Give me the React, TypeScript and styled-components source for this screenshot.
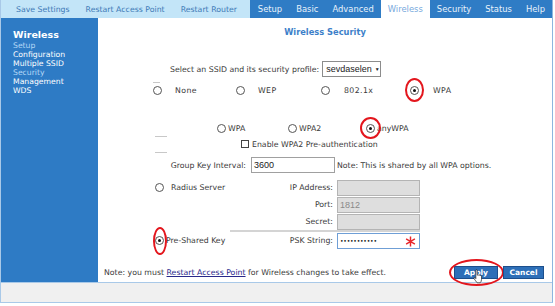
import React from 'react';
import styled, { createGlobalStyle } from 'styled-components';

const GlobalStyle = createGlobalStyle`
  html, body { margin: 0; padding: 0; background: #fff; }
  body {
    font-family: 'DejaVu Sans', Verdana, sans-serif;
    font-size: 7.8px;
    color: #3a3a3a;
  }
`;

const ACTIONS = ['Save Settings', 'Restart Access Point', 'Restart Router'];
const TABS = ['Setup', 'Basic', 'Advanced', 'Wireless', 'Security', 'Status', 'Help'];
const SIDE_ITEMS = [
  { label: 'Setup', dim: true },
  { label: 'Configuration' },
  { label: 'Multiple SSID' },
  { label: 'Security', dim: true },
  { label: 'Management' },
  { label: 'WDS' },
];

export default function App() {
  return (
    <>
      <GlobalStyle />
      <Frame>
        <TopBar>
          <ActionZone>
            {ACTIONS.map((a) => (
              <ActionLink key={a}>{a}</ActionLink>
            ))}
          </ActionZone>
          <TabZone>
            {TABS.map((t) => (
              <Tab key={t} active={t === 'Wireless'}>
                {t}
              </Tab>
            ))}
          </TabZone>
        </TopBar>

        <Body>
          <Sidebar>
            <SideTitle>Wireless</SideTitle>
            {SIDE_ITEMS.map((s) => (
              <SideItem key={s.label} dim={s.dim}>
                {s.label}
              </SideItem>
            ))}
          </Sidebar>

          <Main>
            <Tick left={55} top={64} width={7} />
            <Tick left={57} top={118} width={12} />
            <Tick left={57} top={134} width={12} />

            <Title>Wireless Security</Title>

            <Row height={18} top={14} pad={72}>
              <Label>Select an SSID and its security profile:</Label>
              <Select>
                sevdaselen <Caret>▼</Caret>
              </Select>
            </Row>

            <Row height={16} top={4} pad={55}>
              <Option width={83} gap={13}>
                <Radio />
                <Spaced>None</Spaced>
              </Option>
              <Option width={85} gap={13}>
                <Radio />
                <Spaced>WEP</Spaced>
              </Option>
              <Option width={89} gap={14}>
                <Radio />
                <Spaced>802.1x</Spaced>
              </Option>
              <Option width={60} gap={14}>
                <Radio checked>
                  <Ring w={19} h={24} />
                </Radio>
                <Spaced>WPA</Spaced>
              </Option>
            </Row>

            <Row height={14} top={23} pad={119}>
              <Option width={71} gap={2}>
                <Radio />
                <span>WPA</span>
              </Option>
              <Option width={78} gap={2}>
                <Radio />
                <span>WPA2</span>
              </Option>
              <Option width={60} gap={2}>
                <Radio checked>
                  <Ring w={21} h={22} />
                </Radio>
                <span>anyWPA</span>
              </Option>
            </Row>

            <Row height={12} top={3} pad={143}>
              <Option width={200} gap={3}>
                <Checkbox />
                <span>Enable WPA2 Pre-authentication</span>
              </Option>
            </Row>

            <Row height={18} top={6} pad={57}>
              <FieldLabel width={91}>Group Key Interval:</FieldLabel>
              <TextBox width={84} style={{ marginLeft: 5 }}>
                3600
              </TextBox>
              <Label style={{ marginLeft: 2 }}>Note: This is shared by all WPA options.</Label>
            </Row>

            <Row height={17} top={5} pad={57}>
              <LeftCell>
                <Option width={120} gap={7}>
                  <Radio />
                  <span>Radius Server</span>
                </Option>
              </LeftCell>
              <FieldLabel width={58}>IP Address:</FieldLabel>
              <TextBox width={83} disabled />
            </Row>
            <Row height={17} top={0} pad={57}>
              <LeftCell />
              <FieldLabel width={58}>Port:</FieldLabel>
              <TextBox width={83} disabled>
                1812
              </TextBox>
            </Row>
            <Row height={17} top={0} pad={57}>
              <LeftCell />
              <FieldLabel width={58}>Secret:</FieldLabel>
              <TextBox width={83} disabled />
            </Row>
            <Separator />
            <Row height={17} top={0} pad={57}>
              <LeftCell>
                <Option width={120} gap={2}>
                  <Radio checked>
                    <Ring w={14} h={28} />
                  </Radio>
                  <span>Pre-Shared Key</span>
                </Option>
              </LeftCell>
              <FieldLabel width={58}>PSK String:</FieldLabel>
              <TextBox width={83} focused>
                <Dots>•••••••••••</Dots>
                <Asterisk viewBox="0 0 12 12">
                  <path d="M6 0.5V11.5M1.2 3.2L10.8 8.8M10.8 3.2L1.2 8.8" stroke="#e8262b" strokeWidth="1.6" />
                </Asterisk>
              </TextBox>
            </Row>

            <NoteRow>
              <Label>
                Note: you must <Link>Restart Access Point</Link> for Wireless changes to take effect.
              </Label>
              <Buttons>
                <Button width={44}>
                  Apply
                  <Ring w={55} h={27} />
                  <Cursor viewBox="0 0 12 18">
                    <path
                      d="M3 1.5c0-.9 1.6-.9 1.6 0V7l.2-.1c.3-.6 1.5-.5 1.6.2.4-.5 1.4-.4 1.5.3.5-.4 1.5-.2 1.5.6V12c0 1.5-.8 2.6-1.5 3.5H4.4C3.4 14.2 1.8 12 1 10.8c-.5-.8.4-1.6 1.2-.9L3 10.8z"
                      fill="#fff"
                      stroke="#222"
                      strokeWidth="0.8"
                    />
                  </Cursor>
                </Button>
                <Button width={41}>Cancel</Button>
              </Buttons>
            </NoteRow>
          </Main>
        </Body>

        <Footer />
      </Frame>
    </>
  );
}

const Frame = styled.div`
  width: 553px;
  height: 303px;
  box-sizing: border-box;
  border-left: 1px solid #a9c9e8;
  border-right: 1px solid #8db6df;
  border-bottom: 1px solid #a9c9e8;
  display: flex;
  flex-direction: column;
`;

const TopBar = styled.div`
  display: flex;
  height: 18px;
  flex-shrink: 0;
`;

const ActionZone = styled.div`
  width: 249px;
  background: #c3e5f8;
  display: flex;
  align-items: center;
  padding-left: 7px;
  box-sizing: border-box;
`;

const ActionLink = styled.span`
  color: #3d79b6;
  padding: 0 8px;
  white-space: nowrap;
`;

const TabZone = styled.div`
  flex: 1;
  background: #2f7cc5;
  display: flex;
  padding-left: 1px;
`;

const Tab = styled.div<{ active?: boolean }>`
  display: flex;
  align-items: center;
  padding: 0 7px;
  font-size: 8.4px;
  white-space: nowrap;
  background: ${({ active }) => (active ? '#fff' : 'transparent')};
  color: ${({ active }) => (active ? '#77a9dd' : '#e9f2fb')};
`;

const Body = styled.div`
  flex: 1;
  display: flex;
`;

const Sidebar = styled.div`
  width: 97px;
  flex-shrink: 0;
  background: #2e7bc5;
  padding: 11px 0 0 12px;
  box-sizing: border-box;
`;

const SideTitle = styled.div`
  font-weight: bold;
  font-size: 9.5px;
  color: #fff;
  line-height: 12px;
`;

const SideItem = styled.div<{ dim?: boolean }>`
  font-size: 7.7px;
  line-height: 9px;
  color: ${({ dim }) => (dim ? '#b4d8f7' : '#fff')};
`;

const Main = styled.div`
  flex: 1;
  position: relative;
  display: flex;
  flex-direction: column;
`;

const Tick = styled.div<{ left: number; top: number; width: number }>`
  position: absolute;
  left: ${({ left }) => left}px;
  top: ${({ top }) => top}px;
  width: ${({ width }) => width}px;
  height: 1px;
  background: #c8c8c8;
`;

const Title = styled.div`
  height: 28px;
  line-height: 28px;
  text-align: center;
  font-weight: bold;
  font-size: 8.3px;
  color: #3d7fc9;
`;

const Row = styled.div<{ height: number; top: number; pad: number }>`
  display: flex;
  align-items: center;
  height: ${({ height }) => height}px;
  margin-top: ${({ top }) => top}px;
  padding-left: ${({ pad }) => pad}px;
  white-space: nowrap;
`;

const Label = styled.span`
  white-space: nowrap;
`;

const Spaced = styled.span`
  letter-spacing: 0.4px;
`;

const Select = styled.div`
  margin-left: 3px;
  width: 59px;
  height: 16px;
  box-sizing: border-box;
  border: 1px solid #8c8c8c;
  display: flex;
  align-items: center;
  padding-left: 3px;
  font-family: 'Liberation Sans', Arial, sans-serif;
  font-size: 9px;
  color: #222;
`;

const Caret = styled.span`
  font-size: 5px;
  margin-left: 3px;
`;

const Option = styled.div<{ width: number; gap: number }>`
  width: ${({ width }) => width}px;
  display: flex;
  align-items: center;
  gap: ${({ gap }) => gap}px;
`;

const Radio = styled.span<{ checked?: boolean }>`
  position: relative;
  width: 9px;
  height: 9px;
  box-sizing: border-box;
  border: 1px solid #555;
  border-radius: 50%;
  background: #fff;
  flex-shrink: 0;
  &::after {
    content: '';
    display: ${({ checked }) => (checked ? 'block' : 'none')};
    position: absolute;
    left: 2px;
    top: 2px;
    width: 3px;
    height: 3px;
    border-radius: 50%;
    background: #111;
  }
`;

const Ring = styled.span<{ w: number; h: number }>`
  position: absolute;
  left: 50%;
  top: 50%;
  width: ${({ w }) => w}px;
  height: ${({ h }) => h}px;
  margin-left: ${({ w }) => -w / 2}px;
  margin-top: ${({ h }) => -h / 2}px;
  border: 2px solid #e3161d;
  border-radius: 50%;
  box-sizing: border-box;
  pointer-events: none;
`;

const Checkbox = styled.span`
  width: 8px;
  height: 8px;
  box-sizing: border-box;
  border: 1px solid #444;
  background: #fff;
`;

const FieldLabel = styled.span<{ width: number }>`
  width: ${({ width }) => width}px;
  text-align: right;
  flex-shrink: 0;
`;

const TextBox = styled.div<{ width: number; disabled?: boolean; focused?: boolean }>`
  position: relative;
  width: ${({ width }) => width}px;
  height: 16px;
  box-sizing: border-box;
  margin-left: 4px;
  padding-left: 2px;
  display: flex;
  align-items: center;
  flex-shrink: 0;
  font-family: 'Liberation Sans', Arial, sans-serif;
  font-size: 9px;
  color: ${({ disabled }) => (disabled ? '#8a8a8a' : '#222')};
  background: ${({ disabled }) => (disabled ? '#dedede' : '#fff')};
  border: 1px solid
    ${({ disabled, focused }) => (focused ? '#6f9fd6' : disabled ? '#b4b4b4' : '#a0a0a0')};
`;

const Dots = styled.span`
  font-family: 'DejaVu Sans', sans-serif;
  font-size: 6px;
  letter-spacing: -0.2px;
  color: #111;
`;

const Asterisk = styled.svg`
  position: absolute;
  right: 3px;
  top: 2px;
  width: 11px;
  height: 11px;
`;

const LeftCell = styled.div`
  width: 120px;
  flex-shrink: 0;
  display: flex;
  align-items: center;
`;

const Separator = styled.div`
  margin: 0 0 0 132px;
  width: 190px;
  height: 2px;
  background: #d4d4d4;
`;

const NoteRow = styled.div`
  display: flex;
  align-items: center;
  justify-content: space-between;
  height: 16px;
  margin-top: 15px;
  padding: 0 8px 0 6px;
`;

const Link = styled.span`
  color: #28288a;
  text-decoration: underline;
`;

const Buttons = styled.div`
  display: flex;
  gap: 5px;
`;

const Button = styled.div<{ width: number }>`
  position: relative;
  width: ${({ width }) => width}px;
  height: 13px;
  box-sizing: border-box;
  background: #2d6fb8;
  border: 1px solid #1c4f8c;
  color: #fff;
  font-weight: bold;
  font-size: 7.5px;
  display: flex;
  align-items: center;
  justify-content: center;
`;

const Cursor = styled.svg`
  position: absolute;
  left: 18px;
  top: 2px;
  width: 11px;
  height: 16px;
`;

const Footer = styled.div`
  height: 19px;
  flex-shrink: 0;
  background: #f0f0f0;
  border-top: 1px solid #a9c9e8;
`;
